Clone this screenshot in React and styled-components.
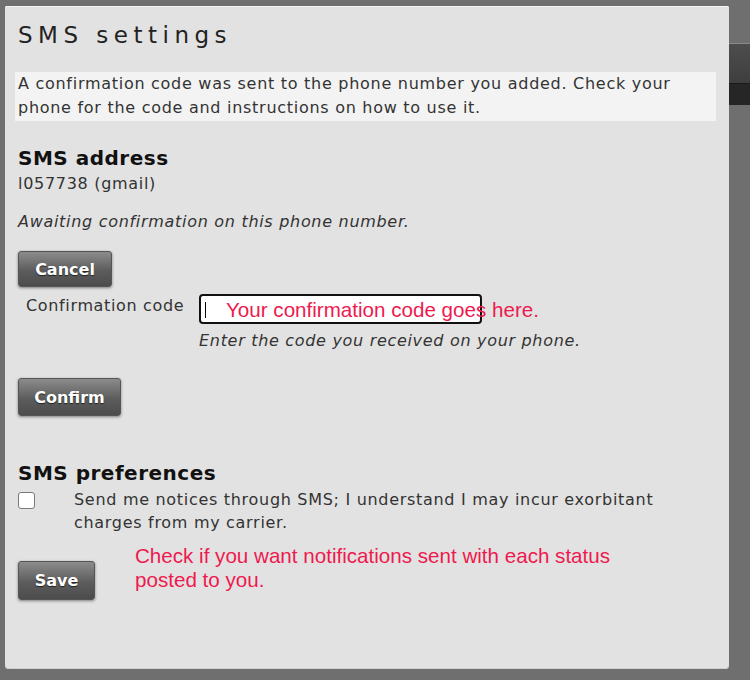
import React from "react";
import styled, { createGlobalStyle } from "styled-components";

const Global = createGlobalStyle`
  html, body { margin: 0; padding: 0; background: #6f6f6f; }
  body { font-family: "DejaVu Sans", Verdana, sans-serif; }
`;

const Screen = styled.div`
  width: 750px;
  height: 680px;
  display: flex;
  align-items: flex-start;
  overflow: hidden;
  background: #6f6f6f;
`;

const Dialog = styled.div`
  margin: 6px 0 0 5px;
  width: 724px;
  height: 663px;
  box-sizing: border-box;
  background: #e2e2e2;
  border-radius: 2px 2px 4px 4px;
  box-shadow: 0 1px 0 #f2f2f2 inset, 0 -1px 0 #cfcfcf inset;
  padding: 14px 13px 0 10px;
  color: #333;
`;

const SideStrip = styled.div`
  margin-top: 43px;
  width: 21px;
  display: flex;
  flex-direction: column;
`;

const StripBlock = styled.div`
  height: ${(p) => p.$h}px;
  background: ${(p) => p.$bg};
  border-top: 1px solid ${(p) => p.$line};
`;

const Title = styled.h1`
  margin: 0 0 0 3px;
  font-size: 23px;
  font-weight: normal;
  letter-spacing: 5.5px;
  line-height: 30px;
  color: #222;
`;

const Notice = styled.p`
  margin: 22px 0 0 0;
  background: #f3f3f3;
  padding: 0 3px 1px;
  font-size: 16px;
  letter-spacing: 0.72px;
  line-height: 24px;
  color: #333;
`;

const Section = styled.div`
  margin: ${(p) => p.$mt}px 0 0 3px;
`;

const Heading = styled.h2`
  margin: 0;
  font-size: 20px;
  font-weight: bold;
  letter-spacing: 0.5px;
  line-height: 26px;
  color: #111;
`;

const Line = styled.div`
  font-size: 16px;
  letter-spacing: 0.7px;
  line-height: 24px;
  color: #333;
  font-style: ${(p) => (p.$italic ? "italic" : "normal")};
  margin-top: ${(p) => p.$mt || 0}px;
`;

const Button = styled.button`
  display: block;
  flex: none;
  height: ${(p) => p.$h}px;
  width: ${(p) => p.$w}px;
  padding: 0;
  border: 1px solid #555;
  border-radius: 3px;
  background: linear-gradient(#8c8c8c, #5c5c5c 55%, #4c4c4c);
  box-shadow: 0 1px 3px rgba(0, 0, 0, 0.45);
  color: #fff;
  font-family: "DejaVu Sans", Verdana, sans-serif;
  font-size: 16px;
  font-weight: bold;
  text-shadow: 0 1px 1px #222;
  margin-top: ${(p) => p.$mt || 0}px;
`;

const FieldRow = styled.div`
  display: flex;
  align-items: flex-start;
  margin-top: 7px;
`;

const FieldLabel = styled.label`
  width: 173px;
  padding: 2px 0 0 8px;
  font-size: 16px;
  letter-spacing: 0.65px;
  line-height: 20px;
  color: #333;
`;

const FieldCol = styled.div`
  display: flex;
  flex-direction: column;
  position: relative;
`;

const CodeInput = styled.div`
  width: 283px;
  height: 30px;
  box-sizing: border-box;
  background: #fff;
  border: 2px solid #111;
  border-radius: 4px;
  position: relative;
`;

const Caret = styled.span`
  position: absolute;
  left: 4px;
  top: 6px;
  width: 1px;
  height: 16px;
  background: #000;
`;

const Annotation = styled.div`
  font-family: "Liberation Sans", Arial, sans-serif;
  color: #ee1a4f;
  font-size: 20.6px;
  line-height: 24px;
  white-space: nowrap;
`;

const InputNote = styled(Annotation)`
  position: absolute;
  left: 27px;
  top: 4px;
`;

const Hint = styled.div`
  font-size: 16px;
  font-style: italic;
  letter-spacing: 0.69px;
  line-height: 20px;
  color: #333;
  margin-top: 7px;
`;

const CheckRow = styled.div`
  display: flex;
  align-items: flex-start;
`;

const Box = styled.span`
  width: 15px;
  height: 15px;
  margin-top: 6px;
  flex: none;
  border: 1px solid #7a7a7a;
  border-radius: 3px;
  background: #fff;
`;

const CheckText = styled.div`
  margin: 2px 0 0 39px;
  font-size: 16px;
  letter-spacing: 0.7px;
  line-height: 23px;
  color: #333;
`;

const SaveRow = styled.div`
  display: flex;
  align-items: flex-start;
  gap: 40px;
`;

const SaveNote = styled(Annotation)`
  margin-top: 10px;
`;

export default function App() {
  return (
    <>
      <Global />
      <Screen>
        <Dialog>
          <Title>SMS settings</Title>
          <Notice>
            A confirmation code was sent to the phone number you added. Check your
            <br />
            phone for the code and instructions on how to use it.
          </Notice>
          <Section $mt={24}>
            <Heading>SMS address</Heading>
            <Line $mt={1}>l057738 (gmail)</Line>
            <Line $italic $mt={14}>Awaiting confirmation on this phone number.</Line>
            <Button $w={94} $h={36} $mt={17}>Cancel</Button>
            <FieldRow>
              <FieldLabel>Confirmation code</FieldLabel>
              <FieldCol>
                <CodeInput>
                  <Caret />
                </CodeInput>
                <InputNote>Your confirmation code goes here.</InputNote>
                <Hint>Enter the code you received on your phone.</Hint>
              </FieldCol>
            </FieldRow>
            <Button $w={103} $h={38} $mt={27}>Confirm</Button>
          </Section>
          <Section $mt={44}>
            <Heading>SMS preferences</Heading>
            <CheckRow>
              <Box />
              <CheckText>
                Send me notices through SMS; I understand I may incur exorbitant
                <br />
                charges from my carrier.
              </CheckText>
            </CheckRow>
            <SaveRow>
              <Button $w={77} $h={39} $mt={27}>Save</Button>
              <SaveNote>
                Check if you want notifications sent with each status
                <br />
                posted to you.
              </SaveNote>
            </SaveRow>
          </Section>
        </Dialog>
        <SideStrip>
          <StripBlock $h={39} $bg="linear-gradient(#4d4d4d,#3e3e3e)" $line="#8a8a8a" />
          <StripBlock $h={21} $bg="#262626" $line="#1a1a1a" />
        </SideStrip>
      </Screen>
    </>
  );
}
